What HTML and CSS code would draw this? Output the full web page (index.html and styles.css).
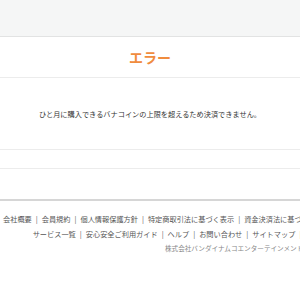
FILE: index.html
```html
<!DOCTYPE html>
<html lang="ja">

<head>
    <meta charset="UTF-8">
    <meta name="viewport" content="width=device-width, initial-scale=1.0">
    <title>エラー</title>
    <link rel="stylesheet" href="styles.css">
</head>

<body>
    <header class="header"></header>

    <main class="main">
        <h1 class="title">エラー</h1>
        <div class="message">
            <p>ひと月に購入できるバナコインの上限を超えるため決済できません。</p>
        </div>
        <div class="divider"></div>
        <div class="spacer"></div>
    </main>

    <footer class="footer">
        <div class="footer-inner">
            <ul class="links first">
                <li>会社概要</li>
                <li>会員規約</li>
                <li>個人情報保護方針</li>
                <li>特定商取引法に基づく表示</li>
                <li>資金決済法に基づく表示</li>
            </ul>
            <ul class="links">
                <li>サービス一覧</li>
                <li>安心安全ご利用ガイド</li>
                <li>ヘルプ</li>
                <li>お問い合わせ</li>
                <li>サイトマップ</li>
                <li></li>
            </ul>
            <p class="copy">株式会社バンダイナムコエンターテインメント</p>
        </div>
    </footer>
</body>

</html>
```

FILE: styles.css
```css
* {
    margin: 0;
    padding: 0;
    box-sizing: border-box;
}

body {
    font-family: "Noto Sans CJK JP", "Noto Sans", sans-serif;
    background: #fff;
    color: #333;
    overflow: hidden;
    width: 300px;
}

.header {
    height: 37px;
    background: #f5f6f6;
    border-bottom: 1px solid #e2e3e3;
}

.title {
    height: 41px;
    display: flex;
    align-items: center;
    justify-content: center;
    font-size: 14px;
    font-weight: bold;
    color: #f08c3e;
    border-bottom: 1px solid #ececec;
}

.message {
    height: 72px;
    display: flex;
    align-items: center;
    justify-content: center;
    font-size: 7.2px;
    color: #333;
    border-bottom: 1px solid #ececec;
}

.divider {
    height: 19px;
    border-bottom: 1px solid #ececec;
}

.spacer {
    height: 30px;
}

.main {
    border-bottom: 2px solid #d6d6d6;
}

.footer {
    padding-top: 11px;
}

.footer-inner {
    width: 338px;
}

.links {
    list-style: none;
    display: flex;
    justify-content: center;
    white-space: nowrap;
    font-size: 7.2px;
    line-height: 15px;
    color: #555;
}

.links.first {
    justify-content: flex-start;
    padding-left: 3px;
}

.links li + li::before {
    content: "|";
    margin: 0 4px;
}

.copy {
    margin-top: 1px;
    padding-left: 165px;
    font-size: 6.6px;
    color: #888;
    white-space: nowrap;
}
```
